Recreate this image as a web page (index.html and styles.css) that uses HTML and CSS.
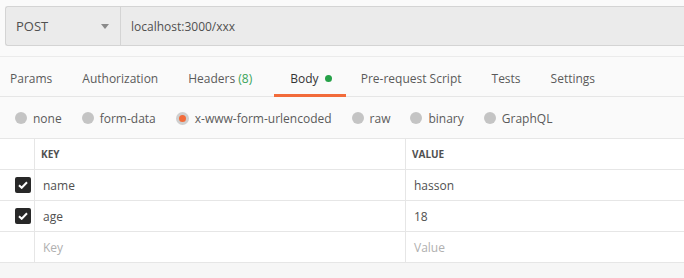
FILE: index.html
```html
<!DOCTYPE html>
<html>
<head>
	<title>POST localhost:3000/xxx</title>
	<meta charset="utf-8">
	<link rel="stylesheet" href="styles.css">
</head>
<body>
<div class="request">
	<div class="method">
		<span>POST</span>
		<i class="caret"></i>
	</div>
	<div class="url">localhost:3000/xxx</div>
</div>

<div class="tabs">
	<div class="tab first">Params</div>
	<div class="tab">Authorization</div>
	<div class="tab headers">Headers <em>(8)</em></div>
	<div class="tab active">Body <b class="dot"></b></div>
	<div class="tab">Pre-request Script</div>
	<div class="tab">Tests</div>
	<div class="tab">Settings</div>
</div>

<div class="modes">
	<label class="radio"><i></i>none</label>
	<label class="radio"><i></i>form-data</label>
	<label class="radio on"><i></i>x-www-form-urlencoded</label>
	<label class="radio"><i></i>raw</label>
	<label class="radio"><i></i>binary</label>
	<label class="radio"><i></i>GraphQL</label>
</div>

<div class="grid">
	<div class="row head">
		<div class="cell check"></div>
		<div class="cell key">KEY</div>
		<div class="cell val">VALUE</div>
	</div>
	<div class="row">
		<div class="cell check"><span class="box"><svg width="10" height="8" viewBox="0 0 10 8"><path d="M1 4.2 3.7 6.8 9 1.2" fill="none" stroke="#fff" stroke-width="2"/></svg></span></div>
		<div class="cell key">name</div>
		<div class="cell val">hasson</div>
	</div>
	<div class="row">
		<div class="cell check"><span class="box"><svg width="10" height="8" viewBox="0 0 10 8"><path d="M1 4.2 3.7 6.8 9 1.2" fill="none" stroke="#fff" stroke-width="2"/></svg></span></div>
		<div class="cell key">age</div>
		<div class="cell val">18</div>
	</div>
	<div class="row empty">
		<div class="cell check"></div>
		<div class="cell key">Key</div>
		<div class="cell val">Value</div>
	</div>
</div>
<div class="rest"></div>
</body>
</html>
```

FILE: styles.css
```css
*{
	margin: 0;
	padding: 0;
	box-sizing: border-box;
}
html,body{
	height: 100%;
}
body{
	background: #fafafa;
	font-family: "Open Sans", "Liberation Sans", sans-serif;
	font-size: 12px;
	color: #505050;
	overflow: hidden;
}
/* 地址栏 */
.request{
	display: flex;
	height: 40px;
	margin: 6px -4px 0 5px;
	background: #ebebeb;
	border: 1px solid #d4d4d4;
	border-right: none;
	border-radius: 3px 0 0 3px;
}
.method{
	width: 115px;
	display: flex;
	align-items: center;
	justify-content: space-between;
	padding: 0 11px 0 10px;
	border-right: 1px solid #d4d4d4;
	font-size: 13px;
	color: #505050;
}
.caret{
	width: 0;
	height: 0;
	border-left: 4px solid transparent;
	border-right: 4px solid transparent;
	border-top: 5px solid #8a8a8a;
}
.url{
	flex: 1;
	display: flex;
	align-items: center;
	padding-left: 10px;
	color: #505050;
}
/* 标签 */
.tabs{
	display: flex;
	margin-top: 10px;
	height: 41px;
	border-top: 1px solid #ebebeb;
	border-bottom: 1px solid #e6e6e6;
}
.tab{
	padding: 13px 15px 0;
	height: 40px;
	line-height: 18px;
	font-size: 12px;
	color: #5a5a5a;
	border-bottom: 3px solid transparent;
	white-space: nowrap;
}
.tab.first{
	padding-left: 10px;
}
.tab.headers{
	padding-right: 22px;
}
.tab em{
	font-style: normal;
	color: #3aa45a;
}
.tab.active{
	padding: 13px 14px 0 16px;
	border-bottom-color: #f26b3a;
	color: #333;
}
.dot{
	display: inline-block;
	width: 7px;
	height: 7px;
	margin-left: 3px;
	border-radius: 50%;
	background: #26a148;
	vertical-align: 1px;
}
/* 单选 */
.modes{
	display: flex;
	align-items: center;
	height: 41px;
	padding-left: 15px;
	padding-top: 1px;
}
.radio{
	display: flex;
	align-items: center;
	margin-right: 20px;
	font-size: 12px;
	color: #5a5a5a;
}
.radio i{
	width: 12px;
	height: 12px;
	border-radius: 50%;
	background: #c4c4c4;
	margin-right: 6px;
}
.radio.on i{
	width: 13px;
	height: 13px;
	background: #f26b3a;
	border: 3px solid #cfcfcf;
}
/* 表格 */
.grid{
	background: #fff;
	border-top: 1px solid #e6e6e6;
}
.row{
	display: flex;
	height: 31px;
	border-bottom: 1px solid #e6e6e6;
}
.cell{
	display: flex;
	align-items: center;
	padding-left: 8px;
	font-size: 12px;
}
.cell.check{
	width: 35px;
	padding-left: 15px;
	border-right: 1px solid #e6e6e6;
}
.cell.key{
	width: 371px;
	border-right: 1px solid #e6e6e6;
}
.cell.val{
	flex: 1;
}
.head .cell{
	font-size: 10px;
	font-weight: bold;
	padding-left: 6px;
	color: #505050;
}
.head .cell.check{
	padding-left: 15px;
}
.empty .cell{
	color: #b0b0b0;
}
.box{
	width: 16px;
	height: 16px;
	border-radius: 2px;
	background: #282828;
	display: flex;
	align-items: center;
	justify-content: center;
}
.rest{
	height: 15px;
	background: #f6f6f6;
}
```
